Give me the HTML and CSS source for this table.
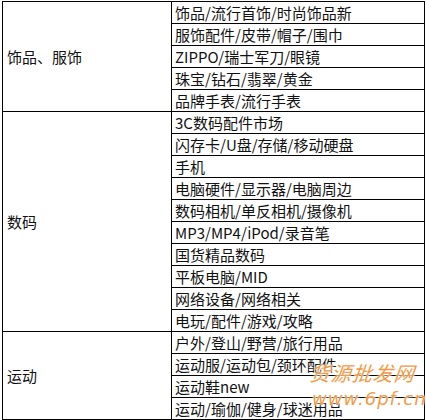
FILE: index.html
```html
<!DOCTYPE html>
<html lang="zh-CN">
<head>
<meta charset="utf-8">
<title>类目表</title>
<link rel="stylesheet" href="styles.css">
</head>
<body>
<div class="sheet">
  <table class="cats">
    <colgroup><col class="c1"><col class="c2"></colgroup>
    <tbody>
      <tr><td class="group" rowspan="5">饰品、服饰</td><td>饰品/流行首饰/时尚饰品新</td></tr>
      <tr><td>服饰配件/皮带/帽子/围巾</td></tr>
      <tr><td>ZIPPO/瑞士军刀/眼镜</td></tr>
      <tr><td>珠宝/钻石/翡翠/黄金</td></tr>
      <tr><td>品牌手表/流行手表</td></tr>
      <tr><td class="group" rowspan="10">数码</td><td>3C数码配件市场</td></tr>
      <tr><td>闪存卡/U盘/存储/移动硬盘</td></tr>
      <tr><td>手机</td></tr>
      <tr><td>电脑硬件/显示器/电脑周边</td></tr>
      <tr><td>数码相机/单反相机/摄像机</td></tr>
      <tr><td>MP3/MP4/iPod/录音笔</td></tr>
      <tr><td>国货精品数码</td></tr>
      <tr><td>平板电脑/MID</td></tr>
      <tr><td>网络设备/网络相关</td></tr>
      <tr><td>电玩/配件/游戏/攻略</td></tr>
      <tr><td class="group" rowspan="4">运动</td><td>户外/登山/野营/旅行用品</td></tr>
      <tr><td>运动服/运动包/颈环配件</td></tr>
      <tr><td>运动鞋new</td></tr>
      <tr><td>运动/瑜伽/健身/球迷用品</td></tr>
    </tbody>
  </table>
  <div class="mark">
    <div class="mark-name">货源批发网</div>
    <div class="mark-url">www.6pf.cn</div>
  </div>
</div>
</body>
</html>
```

FILE: styles.css
```css
html, body {
  margin: 0;
  padding: 0;
  background: #ffffff;
}

.sheet {
  position: relative;
  width: 426px;
  height: 420px;
  padding: 1px 0 0 2px;
  box-sizing: border-box;
  font-family: "Noto Sans CJK SC", "Noto Sans", sans-serif;
  color: #000;
}

.cats {
  border-collapse: collapse;
  table-layout: fixed;
  width: 422px;
  font-size: 15px;
}

.cats .c1 { width: 169px; }
.cats .c2 { width: 253px; }

.cats td {
  border: 1px solid #000;
  height: 20px;
  padding: 1px 0 0 3px;
  line-height: 20px;
  white-space: nowrap;
  overflow: hidden;
  vertical-align: middle;
  color: #111;
}

.cats td.group {
  padding-left: 4px;
}

.mark {
  position: absolute;
  left: 310px;
  top: 361px;
  color: #f39a45;
  text-shadow: 0 0 2px #fff, 0 0 3px #fff;
  font-style: italic;
  pointer-events: none;
}

.mark-name {
  font-size: 20px;
  line-height: 24px;
  letter-spacing: 1px;
  transform: skewX(-6deg);
}

.mark-url {
  font-family: "DejaVu Sans", sans-serif;
  font-size: 18px;
  line-height: 20px;
  margin: 4px 0 0 2px;
  letter-spacing: 1px;
}
```
